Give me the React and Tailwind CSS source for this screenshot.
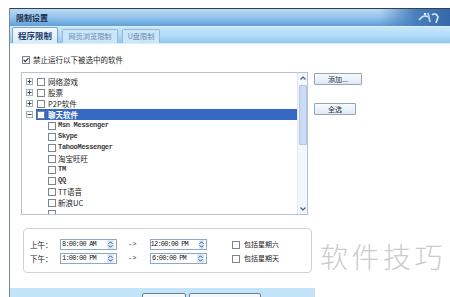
import React from "react";

const CJK = "font-['Noto_Sans_CJK_SC','Noto_Sans',sans-serif]";
const MONO = "font-['Liberation_Mono',monospace]";

function Box({ checked }) {
  return (
    <span className="relative w-[8px] h-[8px] border border-[#7b8591] bg-white shrink-0 flex items-center justify-center">
      {checked && (
        <svg width="6" height="6" viewBox="0 0 6 6" className="block">
          <path d="M0.6 3 L2.3 4.7 L5.4 1.2" stroke="#2a3a2a" strokeWidth="1.2" fill="none" />
        </svg>
      )}
    </span>
  );
}

function Expand({ open }) {
  return (
    <span className="w-[7px] h-[7px] border border-[#a3adb8] bg-white shrink-0 flex items-center justify-center">
      <svg width="5" height="5" viewBox="0 0 5 5" className="block">
        <path d="M0.5 2.5 H4.5" stroke="#39485a" strokeWidth="1" />
        {!open && <path d="M2.5 0.5 V4.5" stroke="#39485a" strokeWidth="1" />}
      </svg>
    </span>
  );
}

function TopRow({ label, open, selected }) {
  return (
    <div className="flex items-center h-[11px] pl-[4px]">
      <Expand open={open} />
      <div
        className={
          "ml-[3px] flex-1 h-[11px] flex items-center pl-[1px] " +
          (selected ? "bg-[#3568c0]" : "")
        }
      >
        <Box />
        <span
          className={
            "ml-[3px] text-[7.5px] leading-none whitespace-nowrap " +
            CJK +
            (selected ? " text-white font-bold" : " text-[#1c1c1c]")
          }
        >
          {label}
        </span>
      </div>
    </div>
  );
}

function ChildRow({ label, mono }) {
  return (
    <div className="flex items-center h-[11px] pl-[26px]">
      <Box />
      <span
        className={
          "ml-[2px] leading-none whitespace-nowrap " +
          (mono
            ? MONO + " text-[7px] font-bold tracking-[-0.3px] text-[#3a3a3a]"
            : CJK + " text-[7.5px] text-[#1c1c1c]")
        }
      >
        {label}
      </span>
    </div>
  );
}

function Spin() {
  return (
    <span className="w-[7px] h-[9px] bg-[#dbe8f8] rounded-[1px] flex items-center justify-center">
      <svg width="5" height="7" viewBox="0 0 5 7" className="block">
        <path d="M0.5 2.8 L2.5 0.8 L4.5 2.8" stroke="#2f5e9e" strokeWidth="1" fill="none" />
        <path d="M0.5 4.2 L2.5 6.2 L4.5 4.2" stroke="#2f5e9e" strokeWidth="1" fill="none" />
      </svg>
    </span>
  );
}

function TimeInput({ value }) {
  return (
    <div className="w-[57px] h-[11px] border border-[#8fa7c0] bg-white flex items-center justify-end pr-[2px]">
      <span className={MONO + " text-[7px] tracking-[-0.8px] leading-none text-[#222] mr-[11px] whitespace-nowrap"}>
        {value}
      </span>
      <Spin />
    </div>
  );
}

function TimeRow({ label, a, b, day }) {
  return (
    <div className="flex items-center h-[11px]">
      <span className={CJK + " w-[30px] text-[7.5px] leading-none text-[#1c1c1c]"}>{label}</span>
      <TimeInput value={a} />
      <span className={MONO + " w-[33px] pl-[11px] text-[7px] leading-none text-[#333]"}>-&gt;</span>
      <TimeInput value={b} />
      <span className="ml-[25px]">
        <Box />
      </span>
      <span className={CJK + " ml-[4px] text-[7px] leading-none text-[#1c1c1c]"}>{day}</span>
    </div>
  );
}

export default function App() {
  return (
    <div className="relative w-[450px] h-[297px] bg-white overflow-hidden">
      <div className="h-[8px]" />
      <div className="ml-[9px] h-[289px] border-l border-[#7c8794] flex flex-col">
        {/* title bar */}
        <div className="relative h-[18px] border-t border-[#33404f] bg-gradient-to-b from-[#bcdaf3] via-[#92c3ec] to-[#5f9fd8] flex items-center pl-[6px]">
          <span className={CJK + " text-[8px] font-bold text-[#1d2f4a] leading-none"}>限制设置</span>
          <div className="absolute right-0 top-0 h-full w-[70px] bg-gradient-to-r from-transparent via-[#4a7fbd] to-[#3468a8]" />
          <svg className="absolute right-[8px] top-[2px]" width="26" height="13" viewBox="0 0 26 13">
            <path d="M3 9 C6 5, 9 4, 12 6" stroke="#cfe2f5" strokeWidth="1.6" fill="none" />
            <path d="M12 2 L14 11" stroke="#b9d3ee" strokeWidth="1.8" fill="none" />
            <path d="M16 4 C18 2, 21 3, 22 6 L20 12" stroke="#dbe9f7" strokeWidth="1.6" fill="none" />
            <circle cx="9" cy="3" r="1.3" fill="#e3eef9" />
          </svg>
        </div>
        {/* tab strip */}
        <div className="h-[18px] border-t border-[#d9effd] bg-gradient-to-b from-[#c6e7fc] via-[#b3ddf9] to-[#8fc6ec] border-b border-[#7fb4dc] flex items-end pl-[2px] gap-[4px]">
          <div className="w-[46px] h-[16px] border border-b-0 border-[#8aa3bb] rounded-t-[2px] bg-gradient-to-b from-[#f1f9ff] to-[#d7ecfa] flex items-center justify-center">
            <span className={CJK + " text-[8.5px] font-bold text-[#1d3a66] leading-none"}>程序限制</span>
          </div>
          <div className="w-[56px] h-[14px] border border-b-0 border-[#9fb6cb] rounded-t-[2px] bg-[#c8e7fb] flex items-center justify-center">
            <span className={CJK + " text-[7.2px] text-[#6f8aa6] leading-none"}>网页浏览限制</span>
          </div>
          <div className="w-[38px] h-[14px] border border-b-0 border-[#9fb6cb] rounded-t-[2px] bg-[#c8e7fb] flex items-center justify-center">
            <span className={CJK + " text-[7.2px] text-[#6f8aa6] leading-none"}>U盘限制</span>
          </div>
        </div>
        {/* content */}
        <div className="flex-1 flex flex-col pl-[11px]">
          <div className="mt-[11px] ml-[1px] h-[9px] flex items-center">
            <Box checked />
            <span className={CJK + " ml-[3px] text-[7.5px] leading-none text-[#1c1c1c]"}>禁止运行以下被选中的软件</span>
          </div>
          <div className="mt-[8px] flex">
            <div className="w-[287px] h-[143px] border border-[#b9c2cc] bg-white flex overflow-hidden">
              <div className="flex-1 pt-[3px] overflow-hidden">
                <TopRow label="网络游戏" />
                <TopRow label="股票" />
                <TopRow label="P2P软件" />
                <TopRow label="聊天软件" open selected />
                <ChildRow label="Msn Messenger" mono />
                <ChildRow label="Skype" mono />
                <ChildRow label="TahooMessenger" mono />
                <ChildRow label="淘宝旺旺" />
                <ChildRow label="TM" mono />
                <ChildRow label="QQ" mono />
                <ChildRow label="TT语音" />
                <ChildRow label="新浪UC" />
                <ChildRow label="" />
              </div>
              <div className="w-[10px] bg-[#f3f6fb] border-l border-[#e3e9f2] flex flex-col items-center">
                <div className="h-[10px] w-full flex items-center justify-center">
                  <svg width="6" height="4" viewBox="0 0 6 4" className="block">
                    <path d="M0.5 3.5 L3 1 L5.5 3.5" stroke="#3a5f93" strokeWidth="1.2" fill="none" />
                  </svg>
                </div>
                <div className="mt-[2px] h-[60px] w-[8px] bg-[#c9dbf5] border border-[#b0c6ea] rounded-[1px]" />
                <div className="flex-1" />
                <div className="h-[10px] w-full flex items-center justify-center">
                  <svg width="6" height="4" viewBox="0 0 6 4" className="block">
                    <path d="M0.5 0.5 L3 3 L5.5 0.5" stroke="#3a5f93" strokeWidth="1.2" fill="none" />
                  </svg>
                </div>
              </div>
            </div>
            <div className="ml-[6px] flex flex-col">
              <div className="mt-[1px] w-[48px] h-[12px] border border-[#98a4b1] rounded-[1px] bg-gradient-to-b from-[#f7fbff] to-[#dde9f6] flex items-center justify-center">
                <span className={CJK + " text-[7px] leading-none text-[#333]"}>添加...</span>
              </div>
              <div className="mt-[18px] w-[42px] h-[12px] border border-[#98a4b1] rounded-[1px] bg-gradient-to-b from-[#f7fbff] to-[#dde9f6] flex items-center justify-center">
                <span className={CJK + " text-[7px] leading-none text-[#333]"}>全选</span>
              </div>
            </div>
          </div>
          <div className="mt-[13px] ml-[2px] w-[289px] h-[45px] border border-[#cfd3d8] rounded-[4px] pt-[10px] pl-[6px] flex flex-col gap-[3px]">
            <TimeRow label="上午：" a="8:00:00 AM" b="12:00:00 PM" day="包括星期六" />
            <TimeRow label="下午：" a="1:00:00 PM" b="6:00:00 PM" day="包括星期天" />
          </div>
        </div>
        {/* bottom band */}
        <div className="h-[9px] w-[305px] bg-[#c3e4f8] flex items-start pt-[5px] pl-[132px] gap-[3px] overflow-hidden">
          <div className="w-[44px] h-[10px] shrink-0 border border-[#6d7f93] rounded-[2px] bg-[#f4f8fc]" />
          <div className="w-[72px] h-[10px] shrink-0 border border-[#6d7f93] rounded-[2px] bg-[#f4f8fc]" />
        </div>
      </div>
      <span className={CJK + " absolute left-[320px] top-[242px] text-[28px] font-light leading-none tracking-[3.5px] text-[#cbcbcb]"}>
        软件技巧
      </span>
    </div>
  );
}
